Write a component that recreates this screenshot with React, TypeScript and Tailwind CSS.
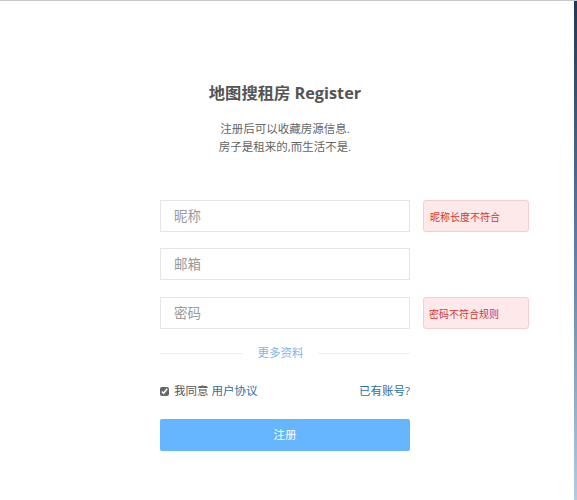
export default function App() {
  return (
    <div
      className="relative h-[500px] w-[577px] overflow-hidden border-t border-[#c8c8c8] bg-white"
      style={{ fontFamily: '"Open Sans", "Noto Sans CJK SC", sans-serif' }}
    >
      <div className="absolute right-0 top-0 h-full w-[3px] bg-gradient-to-b from-[#24365a] via-[#5f7fa8] to-[#b5cbe3]" />
      <div className="ml-[160px] w-[250px] pt-[80px]">
        <h1 className="text-center text-[16.3px] font-bold leading-6 text-[#555]">地图搜租房 Register</h1>
        <div className="mt-[15px] text-center text-[11.5px] leading-[18px] text-[#666]">
          <p>注册后可以收藏房源信息.</p>
          <p>房子是租来的,而生活不是.</p>
        </div>

        <div className="mt-[44px] flex flex-col gap-[16px]">
          <div className="relative">
            <input
              placeholder="昵称"
              className="h-[32px] w-full border border-[#e6e6e6] px-[13px] text-[13.5px] text-[#555] outline-none placeholder:text-[#999]"
            />
            <div className="absolute left-[263px] top-0 flex h-[32px] w-[106px] items-center rounded-[3px] border border-[#f3cfcf] bg-[#fde9e9] pl-[6px] pt-[2px] text-[10px] text-[#d03535]">
              昵称长度不符合
            </div>
          </div>
          <input
            placeholder="邮箱"
            className="h-[32px] w-full border border-[#e6e6e6] px-[13px] text-[13.5px] text-[#555] outline-none placeholder:text-[#999]"
          />
          <div className="relative mt-[1px]">
            <input
              type="password"
              placeholder="密码"
              className="h-[32px] w-full border border-[#e6e6e6] px-[13px] text-[13.5px] text-[#555] outline-none placeholder:text-[#999]"
            />
            <div className="absolute left-[263px] top-0 flex h-[32px] w-[106px] items-center rounded-[3px] border border-[#f3cfcf] bg-[#fde9e9] pl-[5px] pt-[2px] text-[10px] text-[#d03535]">
              密码不符合规则
            </div>
          </div>
        </div>

        <div className="mt-[15px] flex items-center">
          <div className="h-px w-[83px] bg-[#eeeeee]" />
          <span className="mx-auto text-[11.5px] leading-[18px] text-[#7db6e8]">更多资料</span>
          <div className="h-px w-[92px] bg-[#eeeeee]" />
        </div>

        <div className="mt-[19px] flex items-center justify-between text-[11.5px] leading-5">
          <label className="flex items-center text-[#555]">
            <input type="checkbox" defaultChecked className="mr-[5px] h-[9px] w-[9px] accent-[#666]" />
            我同意 <a className="ml-[3px] text-[#2f6ea8]">用户协议</a>
          </label>
          <a className="text-[#2f6ea8]">已有账号?</a>
        </div>

        <button className="mt-[18px] h-[32px] w-full rounded-[2px] bg-[#66b5ff] text-[11.5px] text-white">
          注册
        </button>
      </div>
    </div>
  )
}
